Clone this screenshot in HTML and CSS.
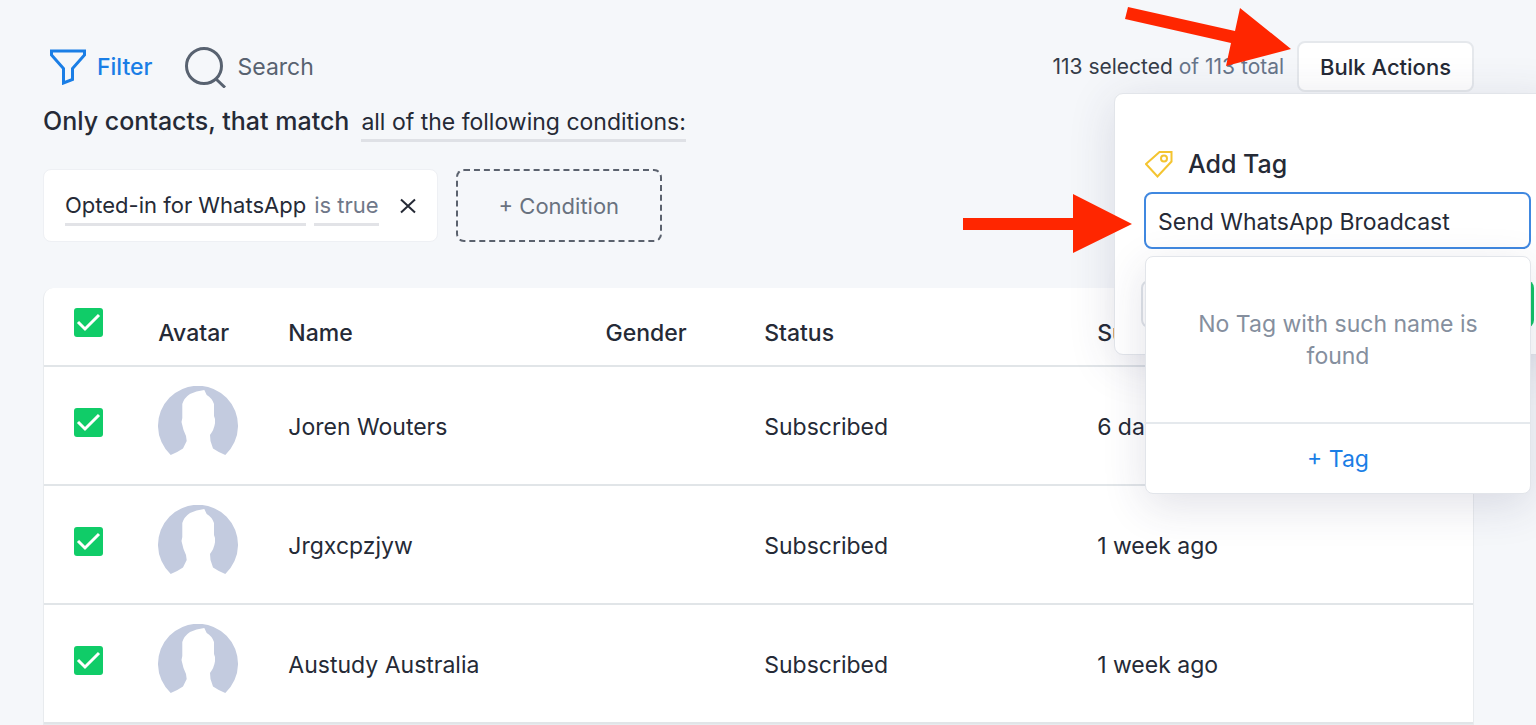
FILE: index.html
```html
<!DOCTYPE html>
<html lang="en">
<head>
<meta charset="utf-8">
<title>Contacts</title>
<link rel="stylesheet" href="styles.css">
</head>
<body>
<svg class="defs" width="0" height="0" aria-hidden="true">
  <symbol id="avatar" viewBox="0 0 80 80">
    <path d="M12.700 69A40 40 0 1 1 67.300 69Q60 66 55 62.500L52.500 55L52 49Q56 44 57 37.300L57 33L56 30V18Q54 12 48.700 9L46.300 4Q38 5 32 8Q26 12 24.300 18V32L23.500 36Q25 44 28 50L28.700 55L25 62.500Q20 66 12.700 69Z"/>
  </symbol>
</svg>
<div class="page">
  <header class="toolbar">
    <button class="tool tool-filter" type="button">
      <svg width="36" height="36" viewBox="0 0 36 36"><path d="M1.500 2H34.500V6L22.500 19.500V30.500L13.500 34V19.500L1.500 6Z"/></svg>
      Filter
    </button>
    <button class="tool tool-search" type="button">
      <svg width="42" height="42" viewBox="0 0 42 42"><circle cx="19" cy="20" r="17.500"/><path d="M30.500 32.500L40 41.500"/></svg>
      Search
    </button>
    <p class="count"><span class="count-selected">113 selected</span> of 113 total</p>
    <div class="bulk">
      <button class="bulk-button" type="button">Bulk Actions</button>
      <section class="panel">
        <label class="panel-title" for="tag">
          <svg width="28" height="28" viewBox="0 0 28 28"><path d="M1 14L14.500 2H26.500V11.500L12.500 26.500Z"/><circle cx="19" cy="8.500" r="3"/></svg>
          Add Tag
        </label>
        <input class="tag-input" id="tag" type="text" value="Send WhatsApp Broadcast">
        <div class="panel-footer">
          <button class="cancel" type="button" aria-label="Cancel"></button>
          <button class="apply" type="button" aria-label="Apply"></button>
        </div>
        <div class="dropdown">
          <p class="dropdown-empty">No Tag with such name is found</p>
          <button class="dropdown-add" type="button">+ Tag</button>
        </div>
      </section>
    </div>
  </header>

  <div class="match">
    <span class="match-lead">Only contacts, that match</span>
    <button class="match-mode" type="button">all of the following conditions:</button>
  </div>

  <div class="conditions">
    <div class="condition">
      <button class="condition-field" type="button">Opted-in for WhatsApp</button>
      <button class="condition-value" type="button">is true</button>
      <button class="condition-remove" type="button" aria-label="Remove condition">
        <svg width="16" height="16" viewBox="0 0 16 16"><path d="M1 1.500L15 14.500M15 1.500L1 14.500"/></svg>
      </button>
    </div>
    <button class="condition-add" type="button">+ Condition</button>
  </div>

  <div class="card">
    <table class="contacts">
      <colgroup>
        <col class="col-check"><col class="col-avatar"><col class="col-name"><col class="col-gender"><col class="col-status"><col>
      </colgroup>
      <thead>
        <tr>
          <th class="check"><input type="checkbox" checked aria-label="Select all"></th>
          <th>Avatar</th><th>Name</th><th>Gender</th><th>Status</th><th>Subscribed</th>
        </tr>
      </thead>
      <tbody>
        <tr>
          <td class="check"><input type="checkbox" checked aria-label="Select Joren Wouters"></td>
          <td><svg class="avatar"><use href="#avatar"/></svg></td>
          <td>Joren Wouters</td><td></td><td>Subscribed</td><td>6 days ago</td>
        </tr>
        <tr>
          <td class="check"><input type="checkbox" checked aria-label="Select Jrgxcpzjyw"></td>
          <td><svg class="avatar"><use href="#avatar"/></svg></td>
          <td>Jrgxcpzjyw</td><td></td><td>Subscribed</td><td>1 week ago</td>
        </tr>
        <tr>
          <td class="check"><input type="checkbox" checked aria-label="Select Austudy Australia"></td>
          <td><svg class="avatar"><use href="#avatar"/></svg></td>
          <td>Austudy Australia</td><td></td><td>Subscribed</td><td>1 week ago</td>
        </tr>
      </tbody>
    </table>
  </div>

  <svg class="arrow arrow-bulk" width="166" height="60" viewBox="0 0 166 60"><path d="M3 0L110 24L115 1L166 42L101 59L106 36L0 12Z"/></svg>
  <svg class="arrow arrow-tag" width="169" height="60" viewBox="0 0 169 60"><path d="M0 24H110V0L169 30L110 59V36H0Z"/></svg>
</div>
</body>
</html>
```
FILE: styles.css
```css
* { box-sizing: border-box; }

body {
  margin: 0;
  background: #f5f7fa;
  color: #252a36;
  font-family: Inter, "Liberation Sans", sans-serif;
  font-size: 23px;
  line-height: 32px;
}

button, input { font: inherit; color: inherit; }
button { padding: 0; border: 0; background: none; cursor: pointer; }
p { margin: 0; }

.defs { position: absolute; }

.page {
  position: relative;
  min-height: 100vh;
  overflow: hidden;
  padding: 41px 62px 0 43px;
}

.toolbar { display: flex; align-items: center; }

.tool {
  display: flex;
  align-items: center;
  gap: 11px;
  font-weight: 500;
}
.tool svg { fill: none; stroke: currentColor; stroke-width: 3; }
.tool-filter { margin-left: 7px; color: #1a7ee6; }
.tool-search { margin-left: 32px; color: #586270; font-weight: 400; }

.count { margin-left: auto; color: #67758a; font-size: 21px; }
.count-selected { color: #353c48; }

.bulk { position: relative; z-index: 2; margin-left: 13px; }
.bulk-button {
  display: block;
  height: 51px;
  padding: 0 21px;
  border: 2px solid #e5e8ec;
  border-radius: 8px;
  background: #fff;
  font-size: 22px;
  font-weight: 500;
}

.panel {
  position: absolute;
  top: 52px;
  right: -87px;
  width: 447px;
  padding: 54px 26px 26px;
  border: 1px solid #e2e5ea;
  border-radius: 9px;
  background: #fff;
  box-shadow: 0 8px 48px rgba(50, 50, 93, .14);
}
.panel-title {
  display: flex;
  align-items: center;
  gap: 15px;
  margin: 0 4px 12px;
  font-size: 25px;
  font-weight: 500;
}
.panel-title svg { fill: none; stroke: #f4c430; stroke-width: 2; }
.tag-input {
  display: block;
  width: 387px;
  height: 57px;
  margin: 0 3px 31px;
  padding: 2px 12px 0;
  border: 2px solid #4088e0;
  border-radius: 8px;
  outline: none;
  background: #fff;
}
.panel-footer { display: flex; justify-content: space-between; }
.cancel, .apply { width: 120px; height: 48px; border-radius: 8px; }
.cancel { border: 2px solid #dfe3e8; }
.apply { background: #12c466; }

.dropdown {
  position: absolute;
  top: 162px;
  left: 30px;
  width: 386px;
  border: 1px solid #e2e5ea;
  border-radius: 8px;
  background: #fff;
  box-shadow: 0 12px 44px rgba(50, 50, 93, .14);
  text-align: center;
}
.dropdown-empty { padding: 51px 48px 50px; color: #858f9e; }
.dropdown-add {
  display: block;
  width: 100%;
  height: 71px;
  border-top: 2px solid #e5e9ed;
  color: #1a7ee6;
}

.match { display: flex; gap: 12px; margin-top: 13px; font-size: 25px; }
.match-lead { font-weight: 500; }
.match-mode { height: 37px; border-bottom: 3px solid #dfe1e6; font-size: 23px; }

.conditions { display: flex; gap: 18px; margin-top: 27px; }
.condition {
  display: flex;
  align-items: center;
  gap: 8px;
  height: 73px;
  padding: 0 21px;
  border: 1px solid #eef0f4;
  border-radius: 8px;
  background: #fff;
}
.condition-field, .condition-value {
  height: 41px;
  padding-top: 1px;
  border-bottom: 3px solid #e2e3e7;
  font-size: 22px;
}
.condition-value { color: #6f7889; }
.condition-remove { display: flex; margin-left: 13px; }
.condition-remove svg { fill: none; stroke: #252a36; stroke-width: 2; }
.condition-add {
  padding: 0 41px;
  border: 2px dashed #5b626e;
  border-radius: 8px;
  color: #69727f;
  font-size: 22px;
}

.card {
  margin-top: 46px;
  border: 1px solid #e8ebee;
  border-top: 0;
  border-radius: 10px 10px 0 0;
  background: #fff;
}
.contacts { width: 100%; border-collapse: collapse; table-layout: fixed; }
.contacts th, .contacts td {
  padding: 0;
  border-bottom: 2px solid #e1e5e8;
  text-align: left;
  white-space: nowrap;
}
.contacts th { height: 78px; padding-top: 13px; font-weight: 500; }
.contacts td { height: 119px; padding-top: 3px; }
.contacts td:nth-child(2) { padding: 0; }
.contacts .check { padding: 20px 0 0 30px; vertical-align: top; }
.contacts td.check { padding-top: 41px; }
.col-check { width: 8%; }
.col-avatar { width: 9.1%; }
.col-name { width: 22.2%; }
.col-gender { width: 11.1%; }
.col-status { width: 23.3%; }

.check input {
  display: block;
  width: 29px;
  height: 29px;
  margin: 0;
  border-radius: 3px;
  appearance: none;
  background: #10cc68 url("data:image/svg+xml,%3Csvg xmlns='http://www.w3.org/2000/svg' viewBox='0 0 29 29'%3E%3Cpath d='M4 14L11 21L25 7' fill='none' stroke='white' stroke-width='3'/%3E%3C/svg%3E");
}
.avatar { display: block; width: 80px; height: 80px; fill: #c3cbdf; }

.arrow { position: absolute; z-index: 3; fill: #ff2600; pointer-events: none; }
.arrow-bulk { top: 7px; right: 245px; }
.arrow-tag { top: 194px; right: 404px; }
```
